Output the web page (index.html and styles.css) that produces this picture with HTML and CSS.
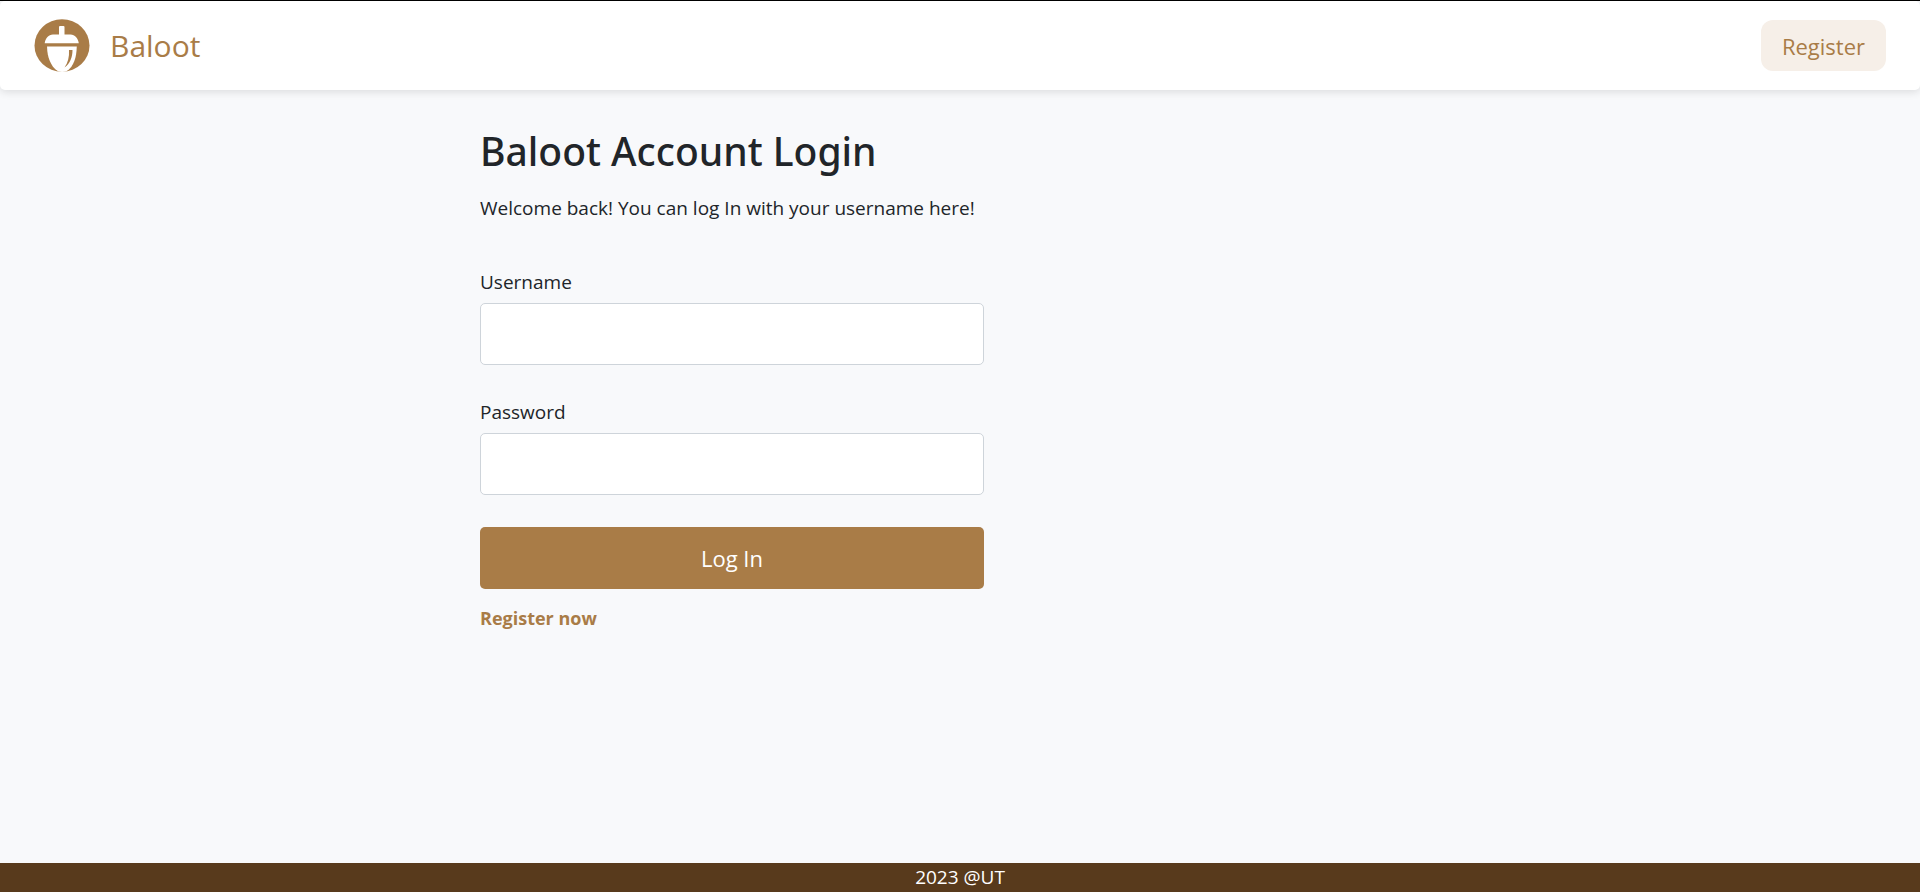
FILE: index.html
```html
<!DOCTYPE html>
<html lang="en">
<head>
<meta charset="utf-8">
<meta name="viewport" content="width=device-width, initial-scale=1">
<title>Baloot</title>
<link rel="stylesheet" href="styles.css">
</head>
<body>
<header class="navbar">
  <a class="brand" href="#">
    <svg class="brand-logo" viewBox="0 0 55 53" aria-hidden="true">
      <ellipse cx="27.5" cy="26.5" rx="27.5" ry="26.3" fill="#a97c47"/>
      <g fill="#fff">
        <path d="M24.5 15.5V8Q24.5 7 25.5 7H29Q30 7 30 8V15.5H36C40.5 15.5 43.5 19 44.3 24.2H10.2C11 19 14 15.5 18.5 15.5Z"/>
        <path d="M12.5 27.5H42.3C42 38 39.5 47.5 32 52.3Q27.5 53.5 23.5 52.3C16 47.5 12.8 38 12.5 27.5Z"/>
      </g>
      <path d="M34.5 31H38C38 38.5 35.5 44.5 30 48.5C33.5 43.5 34.9 38 34.5 31Z" fill="#a97c47"/>
    </svg>
    <span class="brand-name">Baloot</span>
  </a>
  <a class="nav-button" href="#">Register</a>
</header>
<main class="content">
  <h1 class="title">Baloot Account Login</h1>
  <p class="intro">Welcome back! You can log In with your username here!</p>
  <form class="login-form">
    <div class="field">
      <label class="label" for="username">Username</label>
      <input class="input" id="username" type="text">
    </div>
    <div class="field">
      <label class="label" for="password">Password</label>
      <input class="input" id="password" type="password">
    </div>
    <button class="submit" type="submit">Log In</button>
  </form>
  <a class="register-link" href="#">Register now</a>
</main>
<footer class="footer">2023 @UT</footer>
</body>
</html>
```
FILE: styles.css
```css
*, *::before, *::after { box-sizing: border-box; }

body {
  margin: 0;
  min-height: 100vh;
  display: flex;
  flex-direction: column;
  background: #f8f9fb;
  border-top: 1px solid #000;
  color: #212529;
  font-family: "Segoe UI", "Open Sans", "Noto Sans", sans-serif;
  font-size: 19px;
  line-height: 30px;
}

a { color: #a97c47; text-decoration: none; }

.navbar {
  display: flex;
  align-items: center;
  justify-content: space-between;
  padding: 18px 34px;
  background: #fff;
  border-radius: 5px;
  box-shadow: 0 2px 8px rgba(0, 0, 0, 0.12);
}

.brand {
  display: flex;
  align-items: center;
  gap: 20px;
}

.brand-logo { display: block; width: 56px; height: 53px; }

.brand-name { font-size: 30px; }

.nav-button {
  padding: 11px 21px 10px;
  border-radius: 12px;
  background: #f6efe8;
  font-size: 22px;
}

.content {
  flex: 1;
  width: 100%;
  max-width: 504px;
  margin-left: 25%;
  padding: 37px 0;
}

.title {
  margin: 0 0 18px;
  font-family: "Segoe UI", "Noto Sans", sans-serif;
  font-size: 39px;
  font-weight: 500;
  line-height: 48px;
}

.intro { margin: 0 0 44px; }

.login-form {
  display: flex;
  flex-direction: column;
  gap: 32px;
  margin-bottom: 14px;
}

.field {
  display: flex;
  flex-direction: column;
  gap: 6px;
}

.input {
  width: 100%;
  height: 62px;
  padding: 8px 16px;
  border: 1px solid #ced4da;
  border-radius: 5px;
  background: #fff;
  color: inherit;
  font: inherit;
}

.submit {
  height: 62px;
  border: 0;
  border-radius: 5px;
  background: #a97c47;
  color: #fff;
  font-family: inherit;
  font-size: 22px;
}

.register-link { font-size: 18px; font-weight: 700; }

.footer {
  background: #583a1c;
  color: #fff;
  line-height: 29px;
  text-align: center;
}
```
